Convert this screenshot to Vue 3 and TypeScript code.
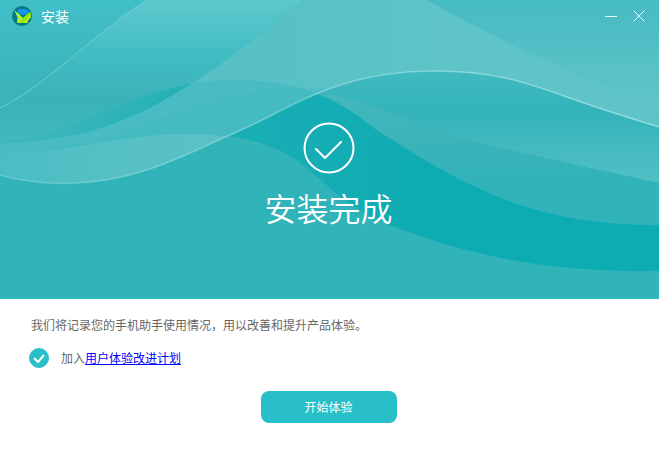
<script setup lang="ts">
import { ref } from 'vue'

const joined = ref<boolean>(true)
</script>

<template>
  <main class="installer">
    <section class="hero">
      <svg class="waves" viewBox="0 0 659 299" preserveAspectRatio="none" aria-hidden="true">
        <defs>
          <linearGradient id="left" x1="0" y1="0" x2="0" y2="144" gradientUnits="userSpaceOnUse">
            <stop offset="0" stop-color="#41bfc7" />
            <stop offset="0.66" stop-color="#3ab3b9" />
            <stop offset="1" stop-color="#42babf" />
          </linearGradient>
          <linearGradient id="sheet" x1="0" y1="0" x2="0" y2="144" gradientUnits="userSpaceOnUse">
            <stop offset="0" stop-color="#5dc8cc" />
            <stop offset="0.35" stop-color="#43bdc4" />
            <stop offset="0.7" stop-color="#39b3b8" />
            <stop offset="1" stop-color="#41b9be" />
          </linearGradient>
          <linearGradient id="lobe" x1="40" y1="0" x2="180" y2="0" gradientUnits="userSpaceOnUse">
            <stop offset="0" stop-color="#3bb6bc" />
            <stop offset="1" stop-color="#24b1b7" />
          </linearGradient>
          <linearGradient id="dark" x1="220" y1="0" x2="440" y2="0" gradientUnits="userSpaceOnUse">
            <stop offset="0" stop-color="#1caeb5" />
            <stop offset="1" stop-color="#0dabb2" />
          </linearGradient>
          <linearGradient id="band" x1="200" y1="0" x2="480" y2="0" gradientUnits="userSpaceOnUse">
            <stop offset="0" stop-color="#55c0c5" />
            <stop offset="1" stop-color="#5fc4c8" />
          </linearGradient>
          <linearGradient id="corner" x1="0" y1="0" x2="0" y2="127" gradientUnits="userSpaceOnUse">
            <stop offset="0" stop-color="#46bbc2" />
            <stop offset="1" stop-color="#66c7cb" />
          </linearGradient>
          <linearGradient id="ridge" x1="0" y1="72" x2="0" y2="184" gradientUnits="userSpaceOnUse">
            <stop offset="0" stop-color="#40babf" />
            <stop offset="0.34" stop-color="#33b3ba" />
            <stop offset="1" stop-color="#52c0c5" />
          </linearGradient>
          <linearGradient id="slope" x1="0" y1="94" x2="0" y2="185" gradientUnits="userSpaceOnUse">
            <stop offset="0" stop-color="#44b7bc" />
            <stop offset="0.6" stop-color="#38b3b9" />
            <stop offset="1" stop-color="#30b3b9" />
          </linearGradient>
          <linearGradient id="foot" x1="0" y1="0" x2="220" y2="0" gradientUnits="userSpaceOnUse">
            <stop offset="0" stop-color="#4abdc3" />
            <stop offset="0.4" stop-color="#53c0c5" />
            <stop offset="1" stop-color="#5cc1c6" />
          </linearGradient>
          <linearGradient id="line" x1="0" y1="0" x2="659" y2="0" gradientUnits="userSpaceOnUse">
            <stop offset="0" stop-color="#9be0e2" stop-opacity="0.35" />
            <stop offset="0.6" stop-color="#9be0e2" stop-opacity="0.65" />
            <stop offset="1" stop-color="#a5e4e6" stop-opacity="0.8" />
          </linearGradient>
          <clipPath id="bandArea">
            <path d="M0 144C54 142 98 133 140 113C205 81 255 38 302 0H659V127C630 118 600 109 570 98C530 84 498 71 435 71C330 71 288 112 223 138C168 164 125 183 65 183.500C40 183 20 181 0 175Z" />
          </clipPath>
        </defs>

        <path fill="#30b3b9" d="M0 0H659V299H0Z" />
        <path fill="url(#slope)" d="M223 138C288 112 330 71 435 71L659 127V225H600L460 180Z" />
        <path fill="url(#ridge)" d="M318 93C370 98 405 122 450 134C520 154 590 167 659 183V100L435 60Z" />
        <path
          fill="url(#dark)"
          d="M0 141C70 139 135 80 235 80C285 80 325 91 362 119C372 127 382 134 394 141C478 195 545 225 659 225V271C540 273 460 252 390 225C345 208 322 178 295 159C265 140 230 134 187 134C120 134 75 153 0 153Z"
        />
        <path fill="url(#left)" d="M0 0H302C255 38 205 81 140 113C98 133 54 142 0 144Z" />
        <path fill="url(#sheet)" d="M147 0C100 29 40 90 0 108V144C54 142 98 133 140 113C205 81 255 38 302 0Z" />
        <path fill="url(#lobe)" d="M0 141C70 139 115 96 197 83C143 119 92 140 0 144Z" />

        <g clip-path="url(#bandArea)">
          <path fill="url(#band)" d="M0 0H659V190H0Z" />
          <path fill="#48bcc2" d="M0 141C70 139 135 80 235 80C270 80 300 85 330 99L270 200H0Z" />
          <path fill="#42b9bf" fill-opacity="0.4" d="M0 152C125 151 185 89 290 89H340L260 140H180C120 134 75 153 0 153Z" />
          <path fill="url(#foot)" d="M0 153C75 153 120 134 187 134C205 134 220 135 240 139V190H0Z" />
          <path fill="url(#corner)" d="M427 0C500 42 575 75 659 108V0Z" />
        </g>

        <path fill="none" stroke="#7dd4d7" stroke-opacity="0.75" d="M147 0C100 29 40 90 0 108" />
        <path
          fill="none"
          stroke="url(#line)"
          stroke-width="1.500"
          d="M0 175C20 181 40 183 65 183.500C125 183 168 164 223 138C288 112 330 71 435 71C498 71 530 84 570 98C600 109 630 118 659 127"
        />
      </svg>

      <header class="titlebar">
        <svg class="logo" viewBox="0 0 20 20" aria-hidden="true">
          <circle cx="10" cy="10" r="10" fill="#087780" />
          <path fill="#1495f5" d="M5 5L7 3H13L17 5L15 8L10 9Z" />
          <path fill="#25c5ef" d="M3 5L8 8L9 14L5 17L5 11Z" />
          <path fill="#c4f51b" d="M2 4L11 12L18 6L19 11L15 16L17 17H6L5 15L7 13Z" />
          <path fill="#8ee812" d="M11 12L18 6L19 9L15 14L10 17L7 16Z" />
        </svg>
        <span class="name">安装</span>
        <button class="control" type="button" aria-label="最小化">
          <svg viewBox="0 0 12 12"><path d="M0 6.500H12" /></svg>
        </button>
        <button class="control" type="button" aria-label="关闭">
          <svg viewBox="0 0 12 12"><path d="M0.500 0.500L11.500 11.500M11.500 0.500L0.500 11.500" /></svg>
        </button>
      </header>

      <div class="result">
        <svg class="done" viewBox="0 0 52 52" aria-hidden="true">
          <circle cx="26" cy="26" r="24.500" />
          <path d="M13 27L22 36L38 20" />
        </svg>
        <h1>安装完成</h1>
      </div>
    </section>

    <section class="options">
      <p>我们将记录您的手机助手使用情况，用以改善和提升产品体验。</p>
      <div class="join">
        <span class="tick">
          <input id="join" v-model="joined" type="checkbox" />
          <svg v-if="joined" viewBox="0 0 20 20" aria-hidden="true"><path d="M5 10L9 14L15 7" /></svg>
        </span>
        <div class="terms"><label for="join">加入</label><a href="#plan">用户体验改进计划</a></div>
      </div>
      <button class="start" type="button">开始体验</button>
    </section>
  </main>
</template>

<style>
body {
  margin: 0;
  background: #fff;
}
</style>

<style scoped>
.installer {
  font-family: "Microsoft YaHei", "Noto Sans CJK SC", sans-serif;
  font-size: 12px;
  line-height: 20px;
  color: #666;
}

.hero {
  position: relative;
  padding-bottom: 68px;
  color: #fff;
}

.waves {
  position: absolute;
  inset: 0;
  width: 100%;
  height: 100%;
}

.titlebar {
  position: relative;
  display: flex;
  align-items: center;
  height: 32px;
  padding: 0 10px 0 12px;
}

.logo {
  width: 20px;
  height: 20px;
}

.name {
  flex: 1;
  margin-left: 9px;
  font-size: 14px;
  line-height: 20px;
}

.control {
  display: flex;
  align-items: center;
  justify-content: center;
  width: 20px;
  height: 20px;
  margin-left: 8px;
  padding: 0;
  border: 0;
  background: none;
}

.control svg {
  width: 12px;
  height: 12px;
  stroke: #e8fafa;
  fill: none;
}

.result {
  position: relative;
  display: flex;
  flex-direction: column;
  align-items: center;
  padding: 90px 2px 0 0;
}

.done {
  width: 52px;
  height: 52px;
  fill: none;
  stroke: #fff;
  stroke-width: 2;
  stroke-linecap: round;
  stroke-linejoin: round;
}

h1 {
  margin: 9px 0 0;
  font-size: 32px;
  line-height: 48px;
  font-weight: 350;
}

.options {
  display: flex;
  flex-direction: column;
  padding: 16px 31px 24px 29px;
}

p {
  margin: 0 2px;
}

.join {
  display: flex;
  align-items: center;
  gap: 12px;
  margin-top: 13px;
}

.tick {
  display: grid;
  width: 20px;
  height: 20px;
}

.tick input,
.tick svg {
  grid-area: 1 / 1;
  width: 20px;
  height: 20px;
  margin: 0;
}

.tick input {
  appearance: none;
  border: 1px solid #29bfc8;
  border-radius: 50%;
}

.tick input:checked {
  background: #29bfc8;
}

.tick svg {
  pointer-events: none;
  fill: none;
  stroke: #fff;
  stroke-width: 2;
}

a {
  color: #00f;
}

.start {
  align-self: center;
  width: 136px;
  height: 32px;
  margin-top: 23px;
  padding: 0;
  border: 0;
  border-radius: 8px;
  background: #29bfc8;
  color: #fff;
  font: inherit;
}
</style>
